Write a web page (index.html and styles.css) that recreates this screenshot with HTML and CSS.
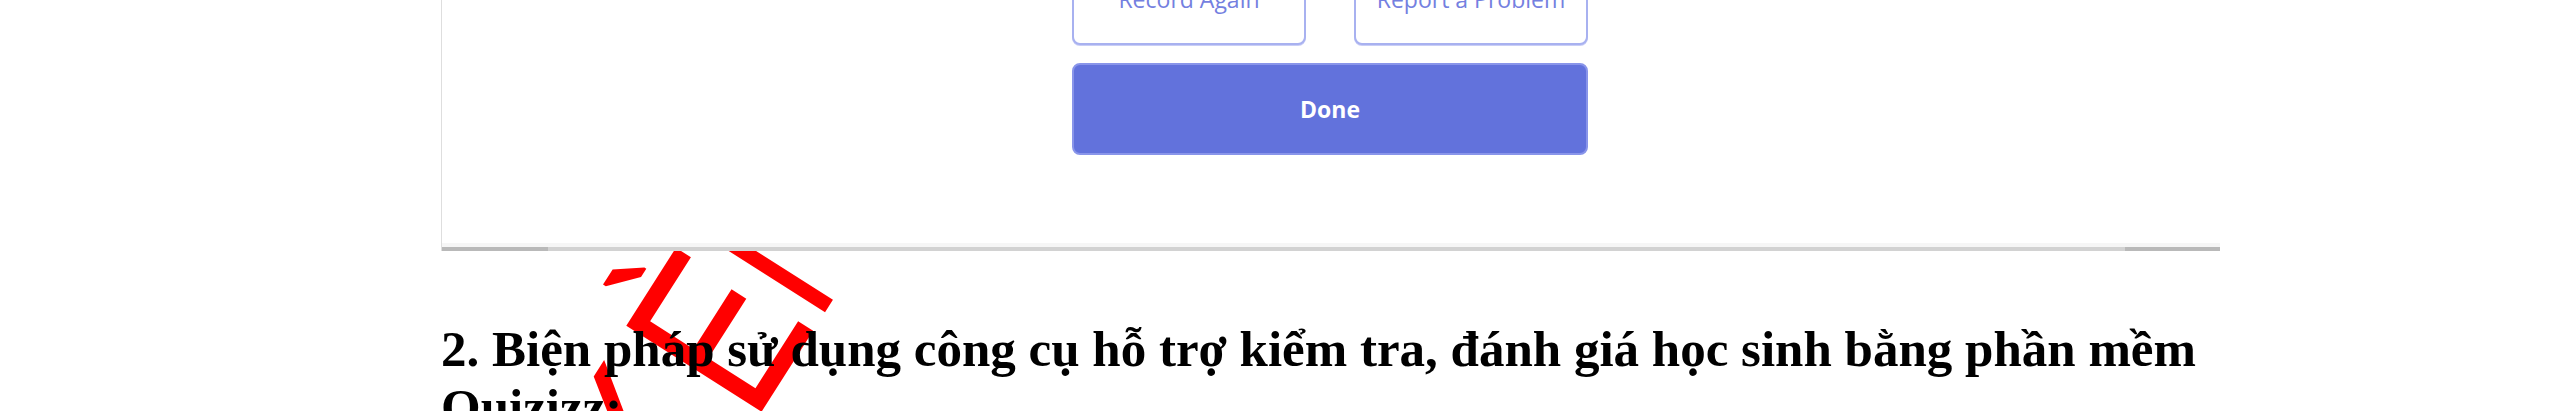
FILE: index.html
```html
<!DOCTYPE html>
<html lang="vi">
<head>
<meta charset="utf-8">
<title>Quizizz</title>
<link rel="stylesheet" href="styles.css">
</head>
<body>
<div class="watermark" aria-hidden="true"><span class="watermark-text"><span class="wm-lead">K</span>ÈN</span></div>
<main class="page">
  <figure class="shot">
    <div class="shot-body">
      <div class="actions">
        <div class="actions-row">
          <button class="btn btn-outline">Record Again</button>
          <button class="btn btn-outline">Report a Problem</button>
        </div>
        <button class="btn btn-primary">Done</button>
      </div>
    </div>
    <div class="scroll-edge"></div>
    <div class="scrollbar">
      <span class="thumb"></span>
      <span class="thumb"></span>
    </div>
  </figure>
  <h2 class="heading">2. Biện pháp sử dụng công cụ hỗ trợ kiểm tra, đánh giá học sinh bằng phần mềm Quizizz:</h2>
</main>
</body>
</html>
```
FILE: styles.css
```css
html, body {
  margin: 0;
  padding: 0;
  background: #ffffff;
}

body {
  overflow: hidden;
}

.page {
  width: 1779px;
  margin-left: 441px;
}

.shot {
  position: relative;
  z-index: 2;
  margin: -62px 0 0 0;
  background: #ffffff;
  border-left: 1px solid #dedede;
}

.shot-body {
  display: flex;
  justify-content: center;
  padding: 15px 0 88px;
}

.actions {
  display: flex;
  flex-direction: column;
  gap: 18px;
  width: 516px;
  margin-left: -2px;
}

.actions-row {
  display: flex;
  justify-content: space-between;
}

.btn {
  box-sizing: border-box;
  height: 92px;
  border-radius: 8px;
  font-family: "Open Sans", "Liberation Sans", sans-serif;
  font-size: 23px;
  display: flex;
  align-items: center;
  justify-content: center;
  padding: 0;
}

.btn-outline {
  width: 234px;
  background: #ffffff;
  border: 2px solid #a8b1f0;
  box-shadow: 0 1px 0 #c9cef6;
  color: #7480e0;
  font-weight: 400;
}

.btn-primary {
  width: 516px;
  background: #6272dc;
  border: 2px solid #8995ea;
  color: #ffffff;
  font-weight: 700;
}

.scroll-edge {
  height: 4px;
  background: #f6f6f6;
}

.scrollbar {
  display: flex;
  justify-content: space-between;
  height: 4px;
  background: #d2d2d2;
}

.thumb {
  width: 106px;
  background: #b9b9b9;
}

.thumb:last-child {
  width: 95px;
}

.heading {
  position: relative;
  z-index: 2;
  margin: 69px 0 0 0;
  font-family: "Liberation Serif", "Times New Roman", serif;
  font-weight: 700;
  font-size: 51px;
  line-height: 58px;
  color: #000000;
}

.watermark {
  position: absolute;
  z-index: 0;
  left: 620px;
  top: 323px;
  transform-origin: 0 0;
  transform: rotate(-57.5deg) scaleX(0.76) translate(-196px, -30px);
}

.watermark-text {
  display: block;
  font-family: "Liberation Sans", Arial, sans-serif;
  font-size: 233px;
  line-height: 1;
  color: #ff0000;
  white-space: nowrap;
}

.wm-lead {
  margin-right: 23px;
}
```
